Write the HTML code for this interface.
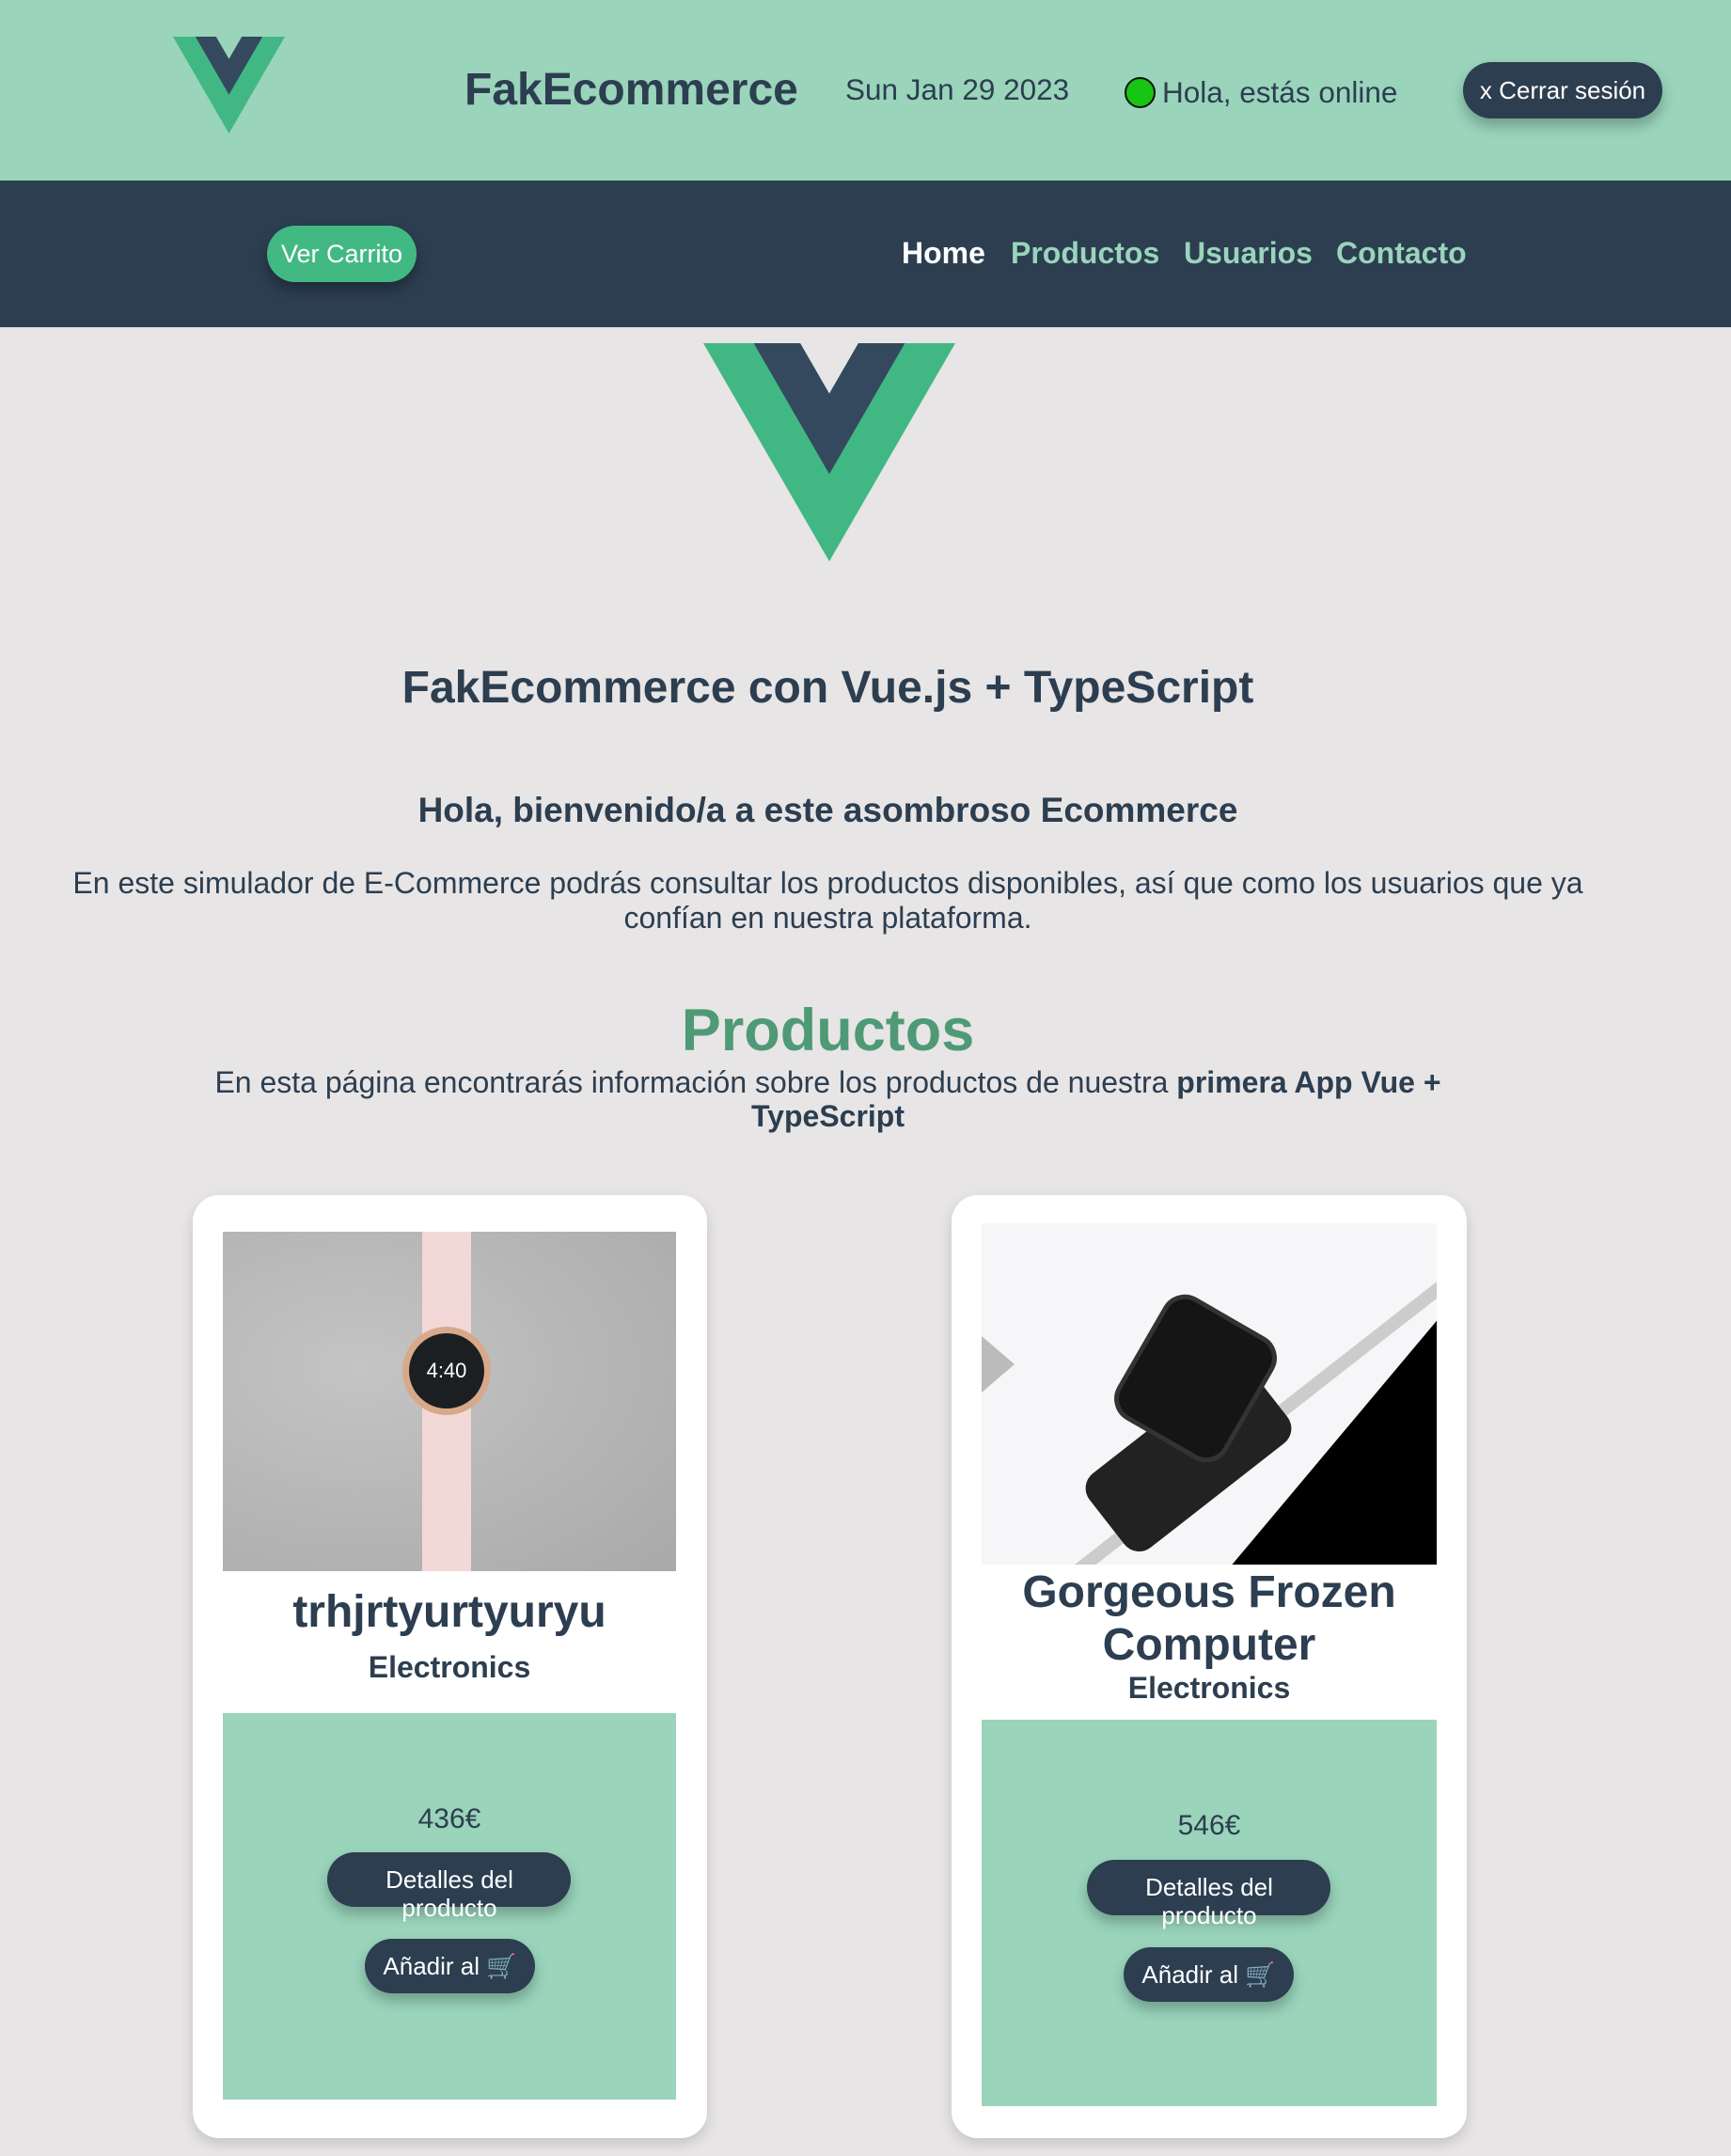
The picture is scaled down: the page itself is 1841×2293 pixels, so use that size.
<!DOCTYPE html>
<html><head><meta charset="utf-8">
<style>
*{margin:0;padding:0;box-sizing:border-box}
body{width:1841px;height:2293px;background:#e7e5e6;font-family:"Liberation Sans",Arial,sans-serif;color:#2c3e50;position:relative;overflow:hidden}
.a{position:absolute}
.c{text-align:center;white-space:nowrap}
.btn{background:#2c3e50;color:#fff;border-radius:30px;box-shadow:0 8px 14px rgba(0,0,0,.25)}
.card{background:#fff;border-radius:28px;box-shadow:0 6px 14px rgba(0,0,0,.15)}
.green{background:#99d4bb}
</style></head><body>
<div class="a green" style="left:0;top:0;width:1841px;height:192px"></div>
<svg class="a" style="left:184px;top:39px" width="119" height="103" viewBox="0 0 261.76 226.69"><path fill="#41b883" d="M161.096.001l-30.225 52.351L100.647.001H-.005l130.877 226.688L261.749.001z"/><path fill="#34495e" d="M161.096.001l-30.225 52.351L100.647.001H52.346l78.526 136.01L209.398.001z"/></svg>
<div class="a" style="left:494px;top:68px;font-size:48px;font-weight:bold">FakEcommerce</div>
<div class="a" style="left:899px;top:77px;font-size:31.5px">Sun Jan 29 2023</div>
<div class="a" style="left:1196px;top:82px;width:33px;height:33px;border-radius:50%;background:#17c411;border:2px solid #111"></div>
<div class="a" style="left:1236px;top:80px;font-size:31.5px">Hola, estás online</div>
<div class="a btn c" style="left:1556px;top:66px;width:212px;height:60px;line-height:60px;font-size:26px">x Cerrar sesión</div>

<div class="a" style="left:0;top:192px;width:1841px;height:156px;background:#2c3e50"></div>
<div class="a c" style="left:284px;top:240px;width:159px;height:60px;line-height:60px;font-size:27px;color:#fff;background:#42b983;border-radius:30px;box-shadow:0 8px 14px rgba(0,0,0,.3)">Ver Carrito</div>
<div class="a" style="left:959px;top:251px;font-size:32px;font-weight:bold;color:#fff">Home</div>
<div class="a" style="left:1075px;top:251px;font-size:32px;font-weight:bold;color:#99d4bb">Productos</div>
<div class="a" style="left:1259px;top:251px;font-size:32px;font-weight:bold;color:#99d4bb">Usuarios</div>
<div class="a" style="left:1421px;top:251px;font-size:32px;font-weight:bold;color:#99d4bb">Contacto</div>

<svg class="a" style="left:748px;top:365px" width="268" height="232" viewBox="0 0 261.76 226.69" preserveAspectRatio="none"><path fill="#41b883" d="M161.096.001l-30.225 52.351L100.647.001H-.005l130.877 226.688L261.749.001z"/><path fill="#34495e" d="M161.096.001l-30.225 52.351L100.647.001H52.346l78.526 136.01L209.398.001z"/></svg>

<div class="a c" style="left:0;width:1761px;top:704px;font-size:48px;font-weight:bold">FakEcommerce con Vue.js + TypeScript</div>
<div class="a c" style="left:0;width:1761px;top:841px;font-size:37px;font-weight:bold">Hola, bienvenido/a a este asombroso Ecommerce</div>
<div class="a" style="left:60px;width:1641px;top:921px;font-size:32px;text-align:center;line-height:37px">En este simulador de E-Commerce podrás consultar los productos disponibles, así que como los usuarios que ya confían en nuestra plataforma.</div>
<div class="a c" style="left:0;width:1761px;top:1060px;font-size:63px;font-weight:bold;color:#4f9a76">Productos</div>
<div class="a" style="left:200px;width:1361px;top:1133px;font-size:32px;text-align:center;line-height:36px">En esta página encontrarás información sobre los productos de nuestra <b>primera App Vue + TypeScript</b></div>

<!-- card 1 -->
<div class="a card" style="left:205px;top:1271px;width:547px;height:1003px"></div>
<div class="a" style="left:237px;top:1310px;width:482px;height:361px;background:radial-gradient(ellipse at 30% 40%,#c4c4c4,#a9a9a9);overflow:hidden">
 <div class="a" style="left:212px;top:0;width:52px;height:361px;background:#f2d8d6"></div>
 <div class="a" style="left:191px;top:101px;width:94px;height:94px;border-radius:50%;background:#d7a98a"></div>
 <div class="a" style="left:198px;top:108px;width:80px;height:80px;border-radius:50%;background:#1b1f22;color:#fff;font-size:22px;text-align:center;line-height:80px">4:40</div>
</div>
<div class="a c" style="left:237px;width:482px;top:1687px;font-size:48px;font-weight:bold">trhjrtyurtyuryu</div>
<div class="a c" style="left:237px;width:482px;top:1755px;font-size:32px;font-weight:bold">Electronics</div>
<div class="a green" style="left:237px;top:1822px;width:482px;height:411px"></div>
<div class="a c" style="left:237px;width:482px;top:1918px;font-size:30px">436€</div>
<div class="a btn" style="left:348px;top:1970px;width:259px;height:58px"></div>
<div class="a c" style="left:237px;width:482px;top:1984px;font-size:26px;line-height:30px;color:#fff">Detalles del<br>producto</div>
<div class="a btn c" style="left:388px;top:2062px;width:181px;height:58px;line-height:58px;font-size:26px">Añadir al 🛒</div>

<!-- card 2 -->
<div class="a card" style="left:1012px;top:1271px;width:548px;height:1003px"></div>
<div class="a" style="left:1044px;top:1301px;width:484px;height:363px;background:#f6f6f8;overflow:hidden">
 <div class="a" style="left:0;top:120px;width:0;height:0;border-top:30px solid transparent;border-bottom:30px solid transparent;border-left:35px solid #bbb"></div>
 <div class="a" style="left:-40px;top:200px;width:700px;height:14px;background:#ccc;transform:rotate(-38deg)"></div>
 <div class="a" style="left:330px;top:160px;width:400px;height:400px;background:#000;transform:rotate(40deg);border-radius:30px"></div>
 <div class="a" style="left:110px;top:200px;width:220px;height:100px;background:#222;transform:rotate(-38deg);border-radius:20px"></div>
 <div class="a" style="left:160px;top:90px;width:135px;height:150px;background:#151515;border-radius:26px;transform:rotate(30deg);border:5px solid #333"></div>
</div>
<div class="a c" style="left:1044px;width:484px;top:1666px;font-size:48px;font-weight:bold;line-height:56px">Gorgeous Frozen<br>Computer</div>
<div class="a c" style="left:1044px;width:484px;top:1777px;font-size:32px;font-weight:bold">Electronics</div>
<div class="a green" style="left:1044px;top:1829px;width:484px;height:411px"></div>
<div class="a c" style="left:1044px;width:484px;top:1925px;font-size:30px">546€</div>
<div class="a btn" style="left:1156px;top:1978px;width:259px;height:59px"></div>
<div class="a c" style="left:1044px;width:484px;top:1992px;font-size:26px;line-height:30px;color:#fff">Detalles del<br>producto</div>
<div class="a btn c" style="left:1195px;top:2071px;width:181px;height:58px;line-height:58px;font-size:26px">Añadir al 🛒</div>
</body></html>
